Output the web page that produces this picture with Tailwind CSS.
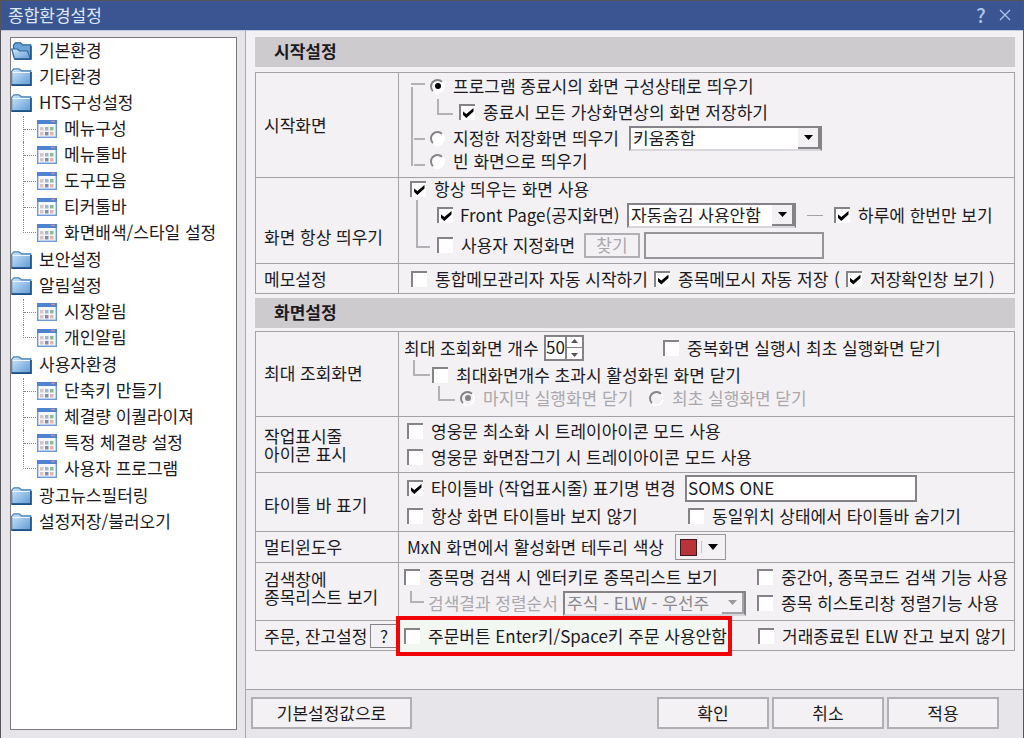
<!DOCTYPE html>
<html lang="ko">
  <head>
    <meta charset="UTF-8" />
    <meta name="viewport" content="width=device-width, initial-scale=1.0" />
    <title>종합환경설정</title>
    <script src="https://cdn.jsdelivr.net/npm/@tailwindcss/browser@4"></script>
  </head>
  <body
    class="flex min-h-screen flex-col border-x border-t border-[#55555c] bg-[#e7e5e9] font-['Noto_Sans_CJK_KR','Liberation_Sans',sans-serif] text-[17px] leading-4 whitespace-nowrap text-[#1c1a1e]"
  >
    <!-- shared icons -->
    <svg class="absolute size-0">
      <defs>
        <linearGradient id="blue" x1="0" y1="0" x2="1" y2="1">
          <stop offset="0" stop-color="#d2e8fa" />
          <stop offset="1" stop-color="#5f9ad6" />
        </linearGradient>
      </defs>
      <symbol id="folder" viewBox="0 0 21 18">
        <path d="M.7 17V3.200L3 .8h5L10.500 2.800H19.800V17z" fill="url(#blue)" stroke="#4682b8" stroke-width="1.200" />
        <path d="M1.500 4.500H19" stroke="#eaf5fd" />
        <path d="M.5 17.100H20V4" fill="none" stroke="#1c4f82" stroke-width="1.600" />
      </symbol>
      <symbol id="folder-open" viewBox="0 0 21 18">
        <path d="M2.500 14V3L4.500 .8h5L11.500 2.800H19.800V17H5z" fill="#6ba5d6" stroke="#2e689c" stroke-width="1.200" />
        <path d="M.7 7H6.500L8.500 9H16.500L19.500 17H3.500z" fill="url(#blue)" stroke="#2e689c" stroke-width="1.200" />
        <path d="M3.500 17.100H20V4" fill="none" stroke="#1c4f82" stroke-width="1.400" />
      </symbol>
      <symbol id="window" viewBox="0 0 20 18">
        <rect x=".7" y=".7" width="18.600" height="16.600" fill="#f6f8fb" stroke="#6c9ad6" stroke-width="1.400" />
        <path d="M0 0H20V4H0z" fill="#4f83cf" />
        <path d="M14 1.500h4" stroke="#c98f9c" stroke-width="1.500" />
        <path d="M3 7h3.500v3.500H3zM3 12h3.500v3.500H3z" fill="#d9c4c2" />
        <path d="M8 7h3.500v3.500H8z" fill="#9fb3d3" />
        <path d="M8 12h3.500v3.500H8z" fill="#8587ad" />
        <path d="M13 7h3.500v3.500H13z" fill="#8cba93" />
        <path d="M13 12h3.500v3.500H13z" fill="#dcb9ae" />
      </symbol>
    </svg>

    <header class="flex h-[30px] items-center border-b border-[#b9c9e2] bg-[#3b5593] pr-1.5 pb-0.5 pl-[7px] text-[#dfe8f7]">
      <h1 class="flex-1">종합환경설정</h1>
      <button type="button" aria-label="도움말" class="w-6 text-xl leading-4 font-medium text-[#a9c4ec]">?</button>
      <button type="button" aria-label="닫기" class="flex w-6 justify-center">
        <svg class="size-3" viewBox="0 0 12 12" fill="none" stroke="#a9c4ec" stroke-width="1.300"><path d="M1 1l10 10M11 1L1 11" /></svg>
      </button>
    </header>

    <div class="flex flex-1">
      <nav class="flex w-[245px] shrink-0 flex-col border-r border-[#aaa8ac] pt-1.5 pr-2 pb-2 pl-[9px]">
        <ul class="flex-1 border border-[#7b797e] bg-white [&_a]:-mt-0.5">
          <li class="flex h-[26px] items-center gap-[7px]"><svg class="h-[18px] w-[21px]"><use href="#folder-open" /></svg><a href="#">기본환경</a></li>
          <li class="flex h-[26px] items-center gap-[7px]"><svg class="h-[18px] w-[21px]"><use href="#folder" /></svg><a href="#">기타환경</a></li>
          <li>
            <div class="flex h-[26px] items-center gap-[7px]"><svg class="h-[18px] w-[21px]"><use href="#folder" /></svg><a href="#">HTS구성설정</a></div>
            <ul class="ml-3 [&>li]:flex [&>li]:h-[26px] [&>li]:items-center [&>li]:border-l [&>li]:border-dotted [&>li]:border-[#8a8a8a]">
              <li><i class="mr-px w-3 border-t border-dotted border-[#8a8a8a]"></i><svg class="mr-[7px] h-[18px] w-5"><use href="#window" /></svg><a href="#">메뉴구성</a></li>
              <li><i class="mr-px w-3 border-t border-dotted border-[#8a8a8a]"></i><svg class="mr-[7px] h-[18px] w-5"><use href="#window" /></svg><a href="#">메뉴툴바</a></li>
              <li><i class="mr-px w-3 border-t border-dotted border-[#8a8a8a]"></i><svg class="mr-[7px] h-[18px] w-5"><use href="#window" /></svg><a href="#">도구모음</a></li>
              <li><i class="mr-px w-3 border-t border-dotted border-[#8a8a8a]"></i><svg class="mr-[7px] h-[18px] w-5"><use href="#window" /></svg><a href="#">티커툴바</a></li>
              <li class="!border-l-0"><i class="mr-px h-[13px] w-[13px] self-start border-b border-l border-dotted border-[#8a8a8a]"></i><svg class="mr-[7px] h-[18px] w-5"><use href="#window" /></svg><a href="#">화면배색/스타일 설정</a></li>
            </ul>
          </li>
          <li class="mt-px flex h-[26px] items-center gap-[7px]"><svg class="h-[18px] w-[21px]"><use href="#folder" /></svg><a href="#">보안설정</a></li>
          <li>
            <div class="flex h-[26px] items-center gap-[7px]"><svg class="h-[18px] w-[21px]"><use href="#folder" /></svg><a href="#">알림설정</a></div>
            <ul class="ml-3 [&>li]:flex [&>li]:h-[26px] [&>li]:items-center [&>li]:border-l [&>li]:border-dotted [&>li]:border-[#8a8a8a]">
              <li><i class="mr-px w-3 border-t border-dotted border-[#8a8a8a]"></i><svg class="mr-[7px] h-[18px] w-5"><use href="#window" /></svg><a href="#">시장알림</a></li>
              <li class="!border-l-0"><i class="mr-px h-[13px] w-[13px] self-start border-b border-l border-dotted border-[#8a8a8a]"></i><svg class="mr-[7px] h-[18px] w-5"><use href="#window" /></svg><a href="#">개인알림</a></li>
            </ul>
          </li>
          <li class="mt-px">
            <div class="flex h-[26px] items-center gap-[7px]"><svg class="h-[18px] w-[21px]"><use href="#folder" /></svg><a href="#">사용자환경</a></div>
            <ul class="ml-3 [&>li]:flex [&>li]:h-[26px] [&>li]:items-center [&>li]:border-l [&>li]:border-dotted [&>li]:border-[#8a8a8a]">
              <li><i class="mr-px w-3 border-t border-dotted border-[#8a8a8a]"></i><svg class="mr-[7px] h-[18px] w-5"><use href="#window" /></svg><a href="#">단축키 만들기</a></li>
              <li><i class="mr-px w-3 border-t border-dotted border-[#8a8a8a]"></i><svg class="mr-[7px] h-[18px] w-5"><use href="#window" /></svg><a href="#">체결량 이퀄라이져</a></li>
              <li><i class="mr-px w-3 border-t border-dotted border-[#8a8a8a]"></i><svg class="mr-[7px] h-[18px] w-5"><use href="#window" /></svg><a href="#">특정 체결량 설정</a></li>
              <li class="!border-l-0"><i class="mr-px h-[13px] w-[13px] self-start border-b border-l border-dotted border-[#8a8a8a]"></i><svg class="mr-[7px] h-[18px] w-5"><use href="#window" /></svg><a href="#">사용자 프로그램</a></li>
            </ul>
          </li>
          <li class="mt-px flex h-[26px] items-center gap-[7px]"><svg class="h-[18px] w-[21px]"><use href="#folder" /></svg><a href="#">광고뉴스필터링</a></li>
          <li class="flex h-[26px] items-center gap-[7px]"><svg class="h-[18px] w-[21px]"><use href="#folder" /></svg><a href="#">설정저장/불러오기</a></li>
        </ul>
      </nav>

      <!-- check boxes and radios are styled once here for the whole form -->
      <form
        class="flex flex-1 flex-col bg-[#f3f1f4] [&_input[type=checkbox]]:grid [&_input[type=checkbox]]:size-4 [&_input[type=checkbox]]:shrink-0 [&_input[type=checkbox]]:appearance-none [&_input[type=checkbox]]:place-items-center [&_input[type=checkbox]]:border-t-2 [&_input[type=checkbox]]:border-l-2 [&_input[type=checkbox]]:border-[#858387] [&_input[type=checkbox]]:bg-white [&_input[type=checkbox]:checked]:before:h-[10px] [&_input[type=checkbox]:checked]:before:w-[11px] [&_input[type=checkbox]:checked]:before:bg-black [&_input[type=checkbox]:checked]:before:[clip-path:polygon(0_30%,35%_60%,100%_0,100%_35%,35%_100%,0_65%)] [&_input[type=radio]]:grid [&_input[type=radio]]:size-[15px] [&_input[type=radio]]:shrink-0 [&_input[type=radio]]:appearance-none [&_input[type=radio]]:place-items-center [&_input[type=radio]]:rounded-full [&_input[type=radio]]:border-2 [&_input[type=radio]]:border-t-[#858387] [&_input[type=radio]]:border-r-white [&_input[type=radio]]:border-b-white [&_input[type=radio]]:border-l-[#858387] [&_input[type=radio]]:bg-white [&_input[type=radio]:checked]:before:size-[6px] [&_input[type=radio]:checked]:before:rounded-full [&_input[type=radio]:checked]:before:bg-black [&_input[type=radio]:disabled]:bg-[#f3f1f4] [&_input[type=radio]:disabled]:before:bg-[#858387] [&_label]:flex [&_label]:items-center [&_label]:gap-2"
      >
        <div class="flex-1 pt-1.5 pr-2 pl-[9px]">
          <h2 class="flex h-[30px] items-center bg-[#cdcbce] pb-0.5 pl-[19px] font-bold">시작설정</h2>
          <section class="mt-[5px] divide-y divide-[#a3a1a5] border border-[#a3a1a5]">
            <div class="flex h-[105px]">
              <h3 class="flex w-[143px] shrink-0 items-center border-r border-[#a3a1a5] pl-2">시작화면</h3>
              <div class="flex pl-3">
                <svg class="mr-[3px] h-[104px] w-4" fill="none" stroke="#b3b1b5" stroke-width="2"><path d="M0 11h14M1 14v79M3 66h11M3 92h11" /></svg>
                <div>
                  <label class="h-[26px]"><input type="radio" name="start" checked />프로그램 종료시의 화면 구성상태로 띄우기</label>
                  <div class="flex h-[26px] items-center pl-[7px]">
                    <svg class="mr-1.5 h-[26px] w-4" fill="none" stroke="#b3b1b5" stroke-width="2"><path d="M1 0v15h15" /></svg>
                    <label><input type="checkbox" checked />종료시 모든 가상화면상의 화면 저장하기</label>
                  </div>
                  <div class="flex h-[26px] items-center">
                    <label class="w-[199px]"><input type="radio" name="start" />지정한 저장화면 띄우기</label>
                    <div class="relative w-[193px]">
                      <select aria-label="저장화면" class="block h-[25px] w-full appearance-none border-2 border-r-[#858387] border-b-[#d8d6da] border-t-[#858387] border-l-[#858387] bg-white pb-px pl-0.5 leading-4"><option>키움종합</option></select>
                      <span class="pointer-events-none absolute inset-y-0.5 right-0.5 flex w-[22px] items-center justify-center border-r-2 border-b-2 border-[#858387] bg-[#f3f1f4]"><svg class="h-[5px] w-[9px]"><path d="M0 0h9L4.500 5z" /></svg></span>
                    </div>
                  </div>
                  <label class="h-5"><input type="radio" name="start" />빈 화면으로 띄우기</label>
                </div>
              </div>
            </div>

            <div class="flex h-[86px]">
              <h3 class="flex w-[143px] shrink-0 items-center border-r border-[#a3a1a5] pt-8 pl-2">화면 항상 띄우기</h3>
              <div class="pl-[11px]">
                <label class="h-[22px]"><input type="checkbox" checked />항상 띄우는 화면 사용</label>
                <div class="flex pl-1.5">
                  <svg class="mr-1.5 h-[60px] w-[15px]" fill="none" stroke="#b3b1b5" stroke-width="2"><path d="M1 0v47h13" /></svg>
                  <div>
                    <div class="flex h-[30px] items-center">
                      <label class="w-[190px] !gap-[7px]"><input type="checkbox" checked />Front Page(공지화면)</label>
                      <div class="relative w-[169px]">
                        <select aria-label="공지화면 표시" class="block h-[25px] w-full appearance-none border-2 border-r-[#858387] border-b-[#d8d6da] border-t-[#858387] border-l-[#858387] bg-white pb-px pl-0.5 leading-4"><option>자동숨김 사용안함</option></select>
                        <span class="pointer-events-none absolute inset-y-0.5 right-0.5 flex w-[22px] items-center justify-center border-r-2 border-b-2 border-[#858387] bg-[#f3f1f4]"><svg class="h-[5px] w-[9px]"><path d="M0 0h9L4.500 5z" /></svg></span>
                      </div>
                      <i class="mx-[11px] w-4 border-t border-[#a3a1a5]"></i>
                      <label><input type="checkbox" checked />하루에 한번만 보기</label>
                    </div>
                    <div class="flex h-[30px] items-center">
                      <label class="w-[147px]"><input type="checkbox" />사용자 지정화면</label>
                      <button type="button" disabled class="h-[25px] w-14 border-2 border-[#b1afb3] text-[#aaa8ac]">찾기</button>
                      <input type="text" aria-label="사용자 지정화면" class="ml-1 h-[27px] w-[180px] border-2 border-[#969498] px-1" />
                    </div>
                  </div>
                </div>
              </div>
            </div>

            <div class="flex h-[29px]">
              <h3 class="flex w-[143px] shrink-0 items-center border-r border-[#a3a1a5] pl-2">메모설정</h3>
              <div class="flex items-center pl-3">
                <label class="w-[243px]"><input type="checkbox" />통합메모관리자 자동 시작하기</label>
                <label class="w-[180px]"><input type="checkbox" checked />종목메모시 자동 저장</label>
                <span class="w-3">(</span>
                <label><input type="checkbox" checked />저장확인창 보기 )</label>
              </div>
            </div>
          </section>

          <h2 class="mt-1 flex h-[30px] items-center bg-[#cdcbce] pb-0.5 pl-[19px] font-bold">화면설정</h2>
          <section class="mt-[3px] divide-y divide-[#a3a1a5] border border-[#a3a1a5]">
            <div class="flex h-[85px]">
              <h3 class="flex w-[143px] shrink-0 items-center border-r border-[#a3a1a5] pb-0.5 pl-2">최대 조회화면</h3>
              <div class="pl-[5px]">
                <div class="flex h-8 items-center">
                  <label class="w-[259px]">
                    <span class="w-[132px]">최대 조회화면 개수</span>
                    <span class="flex h-[26px] w-10 border-2 border-[#858387] bg-white">
                      <input type="text" value="50" class="w-5 min-w-0 flex-1 pb-1" />
                      <span class="flex w-[17px] flex-col items-center justify-around border-l-2 border-[#858387]">
                        <svg class="h-1 w-[7px]"><path d="M0 4h7L3.500 0z" fill="#55535a" /></svg>
                        <i class="w-full border-t border-[#858387]"></i>
                        <svg class="h-1 w-[7px]"><path d="M0 0h7L3.500 4z" fill="#55535a" /></svg>
                      </span>
                    </span>
                  </label>
                  <label><input type="checkbox" />중복화면 실행시 최초 실행화면 닫기</label>
                </div>
                <div class="flex h-[22px] items-center pl-[9px]">
                  <svg class="mr-px h-[22px] w-[18px] overflow-visible" fill="none" stroke="#b3b1b5" stroke-width="2"><path d="M1 -4v15h16" /></svg>
                  <label><input type="checkbox" />최대화면개수 초과시 활성화된 화면 닫기</label>
                </div>
                <div class="flex h-6 items-center pl-[34px] text-[#aaa8ac]">
                  <svg class="mr-[5px] h-6 w-[17px]" fill="none" stroke="#b3b1b5" stroke-width="2"><path d="M1 0v14h16" /></svg>
                  <label class="w-[189px]"><input type="radio" name="close" disabled checked />마지막 실행화면 닫기</label>
                  <label><input type="radio" name="close" disabled />최초 실행화면 닫기</label>
                </div>
              </div>
            </div>

            <div class="flex h-14">
              <h3 class="flex w-[143px] shrink-0 items-center border-r border-[#a3a1a5] pl-2 leading-[18px]">작업표시줄<br />아이콘 표시</h3>
              <div class="pl-2">
                <label class="h-7"><input type="checkbox" />영웅문 최소화 시 트레이아이콘 모드 사용</label>
                <label class="h-6"><input type="checkbox" />영웅문 화면잠그기 시 트레이아이콘 모드 사용</label>
              </div>
            </div>

            <div class="flex h-[59px]">
              <h3 class="flex w-[143px] shrink-0 items-center border-r border-[#a3a1a5] pt-1.5 pl-2">타이틀 바 표기</h3>
              <div class="pl-2">
                <div class="flex h-[30px] items-center">
                  <label class="w-[278px]"><input type="checkbox" checked />타이틀바 (작업표시줄) 표기명 변경</label>
                  <input type="text" value="SOMS ONE" aria-label="표기명" class="h-[27px] w-[232px] border-2 border-[#858387] bg-white px-px pb-0.5" />
                </div>
                <div class="flex h-[26px] items-center">
                  <label class="w-[281px]"><input type="checkbox" />항상 화면 타이틀바 보지 않기</label>
                  <label><input type="checkbox" />동일위치 상태에서 타이틀바 숨기기</label>
                </div>
              </div>
            </div>

            <div class="flex h-[31px]">
              <h3 class="flex w-[143px] shrink-0 items-center border-r border-[#a3a1a5] pl-2">멀티윈도우</h3>
              <div class="flex items-center pl-2">
                <span class="w-[268px]">MxN 화면에서 활성화면 테두리 색상</span>
                <button type="button" aria-label="테두리 색상" class="flex h-[26px] w-[51px] items-center border border-[#969498] pl-1">
                  <i class="size-[17px] border border-[#3d1a1e] bg-[#b93338]"></i>
                  <i class="mx-1 h-3 border-l border-[#c3c1c5]"></i>
                  <svg class="ml-0.5 h-[6px] w-[10px]"><path d="M0 0h10L5 6z" /></svg>
                </button>
              </div>
            </div>

            <div class="flex h-[58px]">
              <h3 class="flex w-[143px] shrink-0 items-center border-r border-[#a3a1a5] pb-2 pl-2 leading-[18px]">검색창에<br />종목리스트 보기</h3>
              <div class="grid grid-cols-[353px_1fr] content-start pl-[5px]">
                <label class="h-7"><input type="checkbox" />종목명 검색 시 엔터키로 종목리스트 보기</label>
                <label class="h-7"><input type="checkbox" />중간어, 종목코드 검색 기능 사용</label>
                <div class="flex h-6 items-center pl-1.5 text-[#aaa8ac]">
                  <svg class="mr-[3px] h-6 w-[15px]" fill="none" stroke="#b3b1b5" stroke-width="2"><path d="M1 0v11h13" /></svg>
                  <span class="w-[135px]">검색결과 정렬순서</span>
                  <div class="relative w-[183px]">
                    <select disabled aria-label="검색결과 정렬순서" class="block h-[25px] w-full appearance-none border-2 border-r-[#858387] border-b-[#d8d6da] border-t-[#858387] border-l-[#858387] pb-px pl-0.5 leading-4 text-[#8b898d] opacity-100"><option>주식 - ELW - 우선주</option></select>
                    <span class="pointer-events-none absolute inset-y-0.5 right-0.5 flex w-[22px] items-center justify-center border-r-2 border-b-2 border-[#a3a1a5] bg-[#f3f1f4]"><svg class="h-[5px] w-[9px]"><path d="M0 0h9L4.500 5z" fill="#9b999d" /></svg></span>
                  </div>
                </div>
                <label class="h-6"><input type="checkbox" />종목 히스토리창 정렬기능 사용</label>
              </div>
            </div>

            <div class="flex h-[29px]">
              <h3 class="flex w-[143px] shrink-0 items-center border-r border-[#a3a1a5] pl-2">
                <span class="w-[106px]">주문, 잔고설정</span>
                <button type="button" aria-label="주문, 잔고설정 도움말" class="h-6 flex-1 border border-[#858387]">?</button>
              </h3>
              <div class="grid grid-cols-[354px_1fr] items-center pl-[5px]">
                <div class="relative z-10 -my-1.5 -ml-2 flex h-10 w-[336px] items-center border-4 border-[#f20509] bg-[#f3f7f2] pl-1">
                  <label><input type="checkbox" />주문버튼 Enter키/Space키 주문 사용안함</label>
                </div>
                <label><input type="checkbox" />거래종료된 ELW 잔고 보지 않기</label>
              </div>
            </div>
          </section>
        </div>

        <footer class="flex h-[49px] shrink-0 gap-[3px] border-t border-[#a3a1a5] bg-[#e7e5e9] pt-[7px] pr-6 pl-[5px] [&>button]:h-8 [&>button]:w-28 [&>button]:border-2 [&>button]:border-[#b1afb3] [&>button]:bg-[#f3f1f4]">
          <button type="button" class="mr-auto !w-[161px]">기본설정값으로</button>
          <button type="submit">확인</button>
          <button type="button">취소</button>
          <button type="button">적용</button>
        </footer>
      </form>
    </div>
  </body>
</html>
